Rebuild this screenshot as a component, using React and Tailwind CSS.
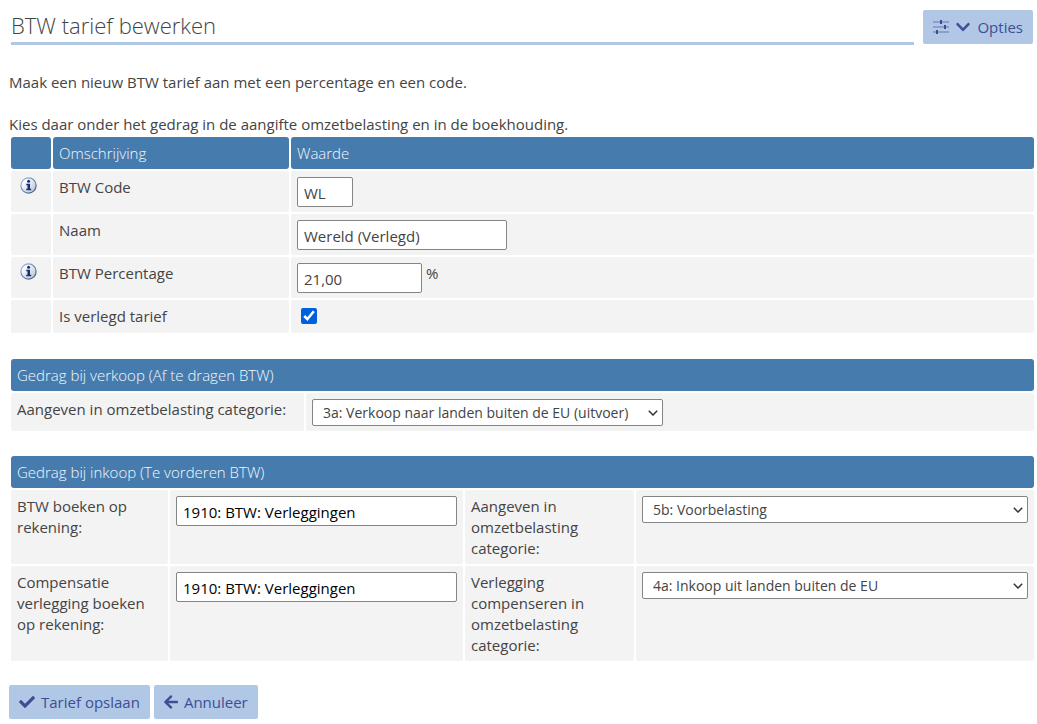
import React, { useState } from "react";
import { FaArrowLeft, FaCheck, FaChevronDown } from "react-icons/fa";

const SALES_CATEGORIES = ["3a: Verkoop naar landen buiten de EU (uitvoer)"];
const INPUT_TAX_CATEGORIES = ["5b: Voorbelasting"];
const REVERSE_CATEGORIES = ["4a: Inkoop uit landen buiten de EU"];

const InfoIcon = () => (
  <svg viewBox="0 0 17 17" className="block w-[17px] h-[17px]" role="img" aria-label="Info">
    <defs>
      <linearGradient id="infoFace" x1="0" y1="0" x2="1" y2="1">
        <stop offset="0.2" stopColor="#ffffff" />
        <stop offset="1" stopColor="#b4bccb" />
      </linearGradient>
      <linearGradient id="infoRing" x1="0" y1="0" x2="1" y2="1">
        <stop offset="0" stopColor="#9cc3ee" />
        <stop offset="1" stopColor="#35507f" />
      </linearGradient>
    </defs>
    <circle cx="8.5" cy="8.5" r="7.6" fill="url(#infoFace)" stroke="url(#infoRing)" strokeWidth="1.2" />
    <circle cx="8.6" cy="4.3" r="1.5" fill="#14307c" />
    <path d="M6.3 6.7h3.7v5h1.2v1.5H6.2v-1.5h1.3V8.2H6.3z" fill="#14307c" />
  </svg>
);

const SlidersIcon = () => (
  <svg viewBox="0 0 16 14" className="w-4 h-3.5" aria-hidden="true">
    <path d="M0 2h16M0 7h16M0 12h16" stroke="#7f93c6" strokeWidth="1.6" />
    <path d="M8 0v4M12 5v4M4 10v4" stroke="#3b4c94" strokeWidth="2" />
  </svg>
);

const Button = ({ children }) => (
  <button
    type="button"
    className="flex items-center h-[34px] gap-1.5 px-2.5 rounded-xs bg-[#b0c7e5] text-[#3d4e96] hover:bg-[#9fbadf]"
  >
    {children}
  </button>
);

const Head = ({ children, colSpan }) => (
  <th
    colSpan={colSpan}
    className="h-8 px-1.5 pt-px rounded-[3px] bg-[#467bae] text-left font-light text-[#f4f8fc]"
  >
    {children}
  </th>
);

const Cell = ({ children, className = "" }) => (
  <td className={`px-1.5 pt-1.5 pb-[5px] rounded-xs bg-[#f3f3f3] align-top ${className}`}>{children}</td>
);

const TextInput = ({ className = "", ...props }) => (
  <input
    type="text"
    className={`block h-[30px] px-1.5 pt-0.5 rounded-xs border border-[#858585] bg-white ${className}`}
    {...props}
  />
);

const Select = ({ options, className = "", ...props }) => (
  <div className={`relative ${className}`}>
    <select
      className="block w-full h-[27px] pl-2.5 pr-7 appearance-none rounded-xs border border-[#858585] bg-white text-sm"
      {...props}
    >
      {options.map((option) => (
        <option key={option}>{option}</option>
      ))}
    </select>
    <svg
      viewBox="0 0 10 6"
      className="absolute top-[11px] right-[5px] w-2.5 h-1.5 pointer-events-none"
      aria-hidden="true"
    >
      <path d="M0.8 0.8L5 5L9.2 0.8" fill="none" stroke="#333333" strokeWidth="1.5" />
    </svg>
  </div>
);

const App = () => {
  const [code, setCode] = useState("WL");
  const [name, setName] = useState("Wereld (Verlegd)");
  const [percentage, setPercentage] = useState("21,00");
  const [reversed, setReversed] = useState(true);
  const [account, setAccount] = useState("1910: BTW: Verleggingen");
  const [compensation, setCompensation] = useState("1910: BTW: Verleggingen");

  return (
    <div className="pl-[9px] pr-px pt-2.5 pb-1 bg-white font-['Open_Sans','Noto_Sans',sans-serif] text-[15px] leading-[21px] text-[#444444]">
      <header className="flex items-start gap-[9px] pl-0.5 pr-[3px]">
        <h1 className="flex-1 h-[35px] border-b-3 border-[#b0c7e5] text-[22px] leading-[30px] font-light">
          BTW tarief bewerken
        </h1>
        <Button>
          <SlidersIcon />
          <FaChevronDown className="w-4 h-4" />
          Opties
        </Button>
      </header>

      <div className="flex flex-col gap-[21px] mt-[27px]">
        <p>Maak een nieuw BTW tarief aan met een percentage en een code.</p>
        <p>Kies daar onder het gedrag in de aangifte omzetbelasting en in de boekhouding.</p>
      </div>

      <form onSubmit={(e) => e.preventDefault()}>
        <table className="w-full border-separate border-spacing-0.5">
          <thead>
            <tr>
              <Head />
              <Head>Omschrijving</Head>
              <Head>Waarde</Head>
            </tr>
          </thead>
          <tbody>
            <tr>
              <Cell className="w-10 pl-[9px]">
                <InfoIcon />
              </Cell>
              <Cell className="w-[236px]">
                <label htmlFor="code">BTW Code</label>
              </Cell>
              <Cell className="h-[41px]">
                <TextInput id="code" className="w-14" value={code} onChange={(e) => setCode(e.target.value)} />
              </Cell>
            </tr>
            <tr>
              <Cell />
              <Cell>
                <label htmlFor="name">Naam</label>
              </Cell>
              <Cell className="h-[41px]">
                <TextInput id="name" className="w-[210px]" value={name} onChange={(e) => setName(e.target.value)} />
              </Cell>
            </tr>
            <tr>
              <Cell className="pl-[9px]">
                <InfoIcon />
              </Cell>
              <Cell>
                <label htmlFor="percentage">BTW Percentage</label>
              </Cell>
              <Cell className="h-[41px]">
                <div className="flex gap-1">
                  <TextInput
                    id="percentage"
                    className="w-[125px]"
                    value={percentage}
                    onChange={(e) => setPercentage(e.target.value)}
                  />
                  <span>%</span>
                </div>
              </Cell>
            </tr>
            <tr>
              <Cell />
              <Cell>
                <label htmlFor="reversed">Is verlegd tarief</label>
              </Cell>
              <Cell className="h-[33px]">
                <input
                  id="reversed"
                  type="checkbox"
                  className="block w-4 h-4 mt-0.5 ml-1 accent-[#0060df]"
                  checked={reversed}
                  onChange={(e) => setReversed(e.target.checked)}
                />
              </Cell>
            </tr>
          </tbody>
        </table>

        <table className="w-full mt-[22px] border-separate border-spacing-0.5">
          <thead>
            <tr>
              <Head colSpan={2}>Gedrag bij verkoop (Af te dragen BTW)</Head>
            </tr>
          </thead>
          <tbody>
            <tr>
              <Cell className="w-[293px]">
                <label htmlFor="sales">Aangeven in omzetbelasting categorie:</label>
              </Cell>
              <Cell>
                <Select id="sales" className="w-[351px]" options={SALES_CATEGORIES} />
              </Cell>
            </tr>
          </tbody>
        </table>

        <table className="w-full mt-[21px] border-separate border-spacing-0.5">
          <thead>
            <tr>
              <Head colSpan={4}>Gedrag bij inkoop (Te vorderen BTW)</Head>
            </tr>
          </thead>
          <tbody>
            <tr>
              <Cell className="w-[157px]">
                <label htmlFor="account">BTW boeken op rekening:</label>
              </Cell>
              <Cell className="w-[293px]">
                <TextInput
                  id="account"
                  className="w-full text-black"
                  value={account}
                  onChange={(e) => setAccount(e.target.value)}
                />
              </Cell>
              <Cell className="w-[169px]">
                <label htmlFor="inputTax">Aangeven in omzetbelasting categorie:</label>
              </Cell>
              <Cell>
                <Select id="inputTax" className="w-full" options={INPUT_TAX_CATEGORIES} />
              </Cell>
            </tr>
            <tr>
              <Cell>
                <label htmlFor="compensation">Compensatie verlegging boeken op rekening:</label>
              </Cell>
              <Cell>
                <TextInput
                  id="compensation"
                  className="w-full text-black"
                  value={compensation}
                  onChange={(e) => setCompensation(e.target.value)}
                />
              </Cell>
              <Cell>
                <label htmlFor="reverse">Verlegging compenseren in omzetbelasting categorie:</label>
              </Cell>
              <Cell>
                <Select id="reverse" className="w-full" options={REVERSE_CATEGORIES} />
              </Cell>
            </tr>
          </tbody>
        </table>

        <div className="flex gap-1 mt-[22px]">
          <Button>
            <FaCheck className="w-4 h-4" />
            Tarief opslaan
          </Button>
          <Button>
            <FaArrowLeft className="w-3.5 h-4" />
            Annuleer
          </Button>
        </div>
      </form>
    </div>
  );
};

export default App;
